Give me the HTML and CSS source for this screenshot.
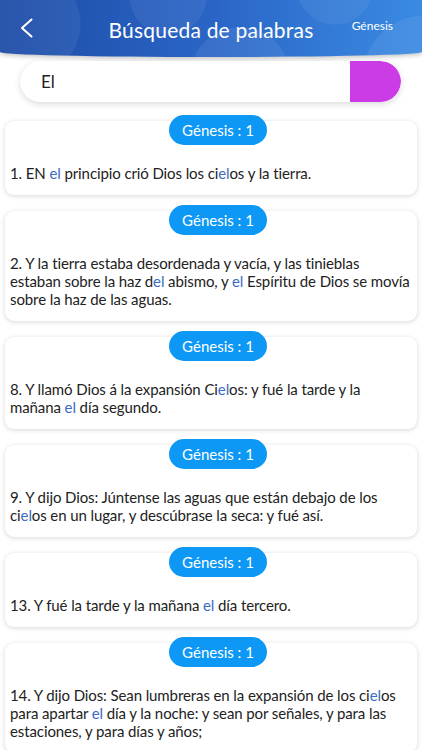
FILE: index.html
```html
<!DOCTYPE html>
<html lang="es">
<head>
    <meta charset="UTF-8">
    <meta name="viewport" content="width=device-width, initial-scale=1.0">
    <title>Búsqueda de palabras</title>
    <link rel="stylesheet" href="styles.css">
</head>
<body>
    <!-- Cabecera -->
    <div class="header">
        <button class="back-btn" aria-label="Atrás">
            <svg width="14" height="22" viewBox="0 0 14 22">
                <path d="M11.5 2.5 L2 11 L11.5 19.5" fill="none" stroke="#fff" stroke-width="2" stroke-linecap="round" stroke-linejoin="round"/>
            </svg>
        </button>
        <h1 class="title">Búsqueda de palabras</h1>
        <span class="book">Génesis</span>
    </div>

    <!-- Barra de búsqueda -->
    <div class="search">
        <input class="search-input" type="text" value="El">
        <button class="search-btn" aria-label="Buscar"></button>
    </div>

    <!-- Resultados -->
    <div class="results">
        <div class="item">
            <span class="pill">Génesis : 1</span>
            <div class="card">1. EN <em>el</em> principio crió Dios los ci<em>el</em>os y la tierra.</div>
        </div>
        <div class="item">
            <span class="pill">Génesis : 1</span>
            <div class="card">2. Y la tierra estaba desordenada y vacía, y las tinieblas estaban sobre la haz d<em>el</em> abismo, y <em>el</em> Espíritu de Dios se movía sobre la haz de las aguas.</div>
        </div>
        <div class="item">
            <span class="pill">Génesis : 1</span>
            <div class="card">8. Y llamó Dios á la expansión Ci<em>el</em>os: y fué la tarde y la mañana <em>el</em> día segundo.</div>
        </div>
        <div class="item">
            <span class="pill">Génesis : 1</span>
            <div class="card">9. Y dijo Dios: Júntense las aguas que están debajo de los ci<em>el</em>os en un lugar, y descúbrase la seca: y fué así.</div>
        </div>
        <div class="item">
            <span class="pill">Génesis : 1</span>
            <div class="card">13. Y fué la tarde y la mañana <em>el</em> día tercero.</div>
        </div>
        <div class="item">
            <span class="pill">Génesis : 1</span>
            <div class="card">14. Y dijo Dios: Sean lumbreras en la expansión de los ci<em>el</em>os para apartar <em>el</em> día y la noche: y sean por señales, y para las estaciones, y para días y años;</div>
        </div>
    </div>
</body>
</html>
```

FILE: styles.css
```css
body {
    margin: 0;
    background-color: #fff;
    font-family: Lato, "Noto Sans", sans-serif;
    color: #222;
    overflow: hidden;
}

/* Cabecera */
.header {
    height: 57px;
    display: grid;
    grid-template-columns: 1fr auto 1fr;
    align-items: center;
    padding: 3px 20px 2px;
    box-sizing: border-box;
    background-color: #2a62c2;
    background-image:
        radial-gradient(circle at 28px 24px, rgba(255, 255, 255, 0.06) 52px, transparent 53px),
        radial-gradient(circle at 168px -4px, rgba(255, 255, 255, 0.06) 38px, transparent 39px),
        radial-gradient(circle at 335px -14px, rgba(255, 255, 255, 0.06) 38px, transparent 39px),
        radial-gradient(circle at 240px 78px, rgba(255, 255, 255, 0.07) 50px, transparent 51px),
        radial-gradient(circle at 425px 78px, rgba(255, 255, 255, 0.07) 62px, transparent 63px),
        linear-gradient(90deg, #1d4ca6 0%, #2a65c6 50%, #3a8ae2 100%);
    border-radius: 0 0 50% 50% / 0 0 5px 5px;
    box-shadow: 0 2px 4px rgba(0, 0, 0, 0.22);
    color: #fff;
}

.back-btn {
    background: none;
    border: none;
    padding: 0;
    width: 14px;
    display: flex;
    margin-top: -3px;
    cursor: pointer;
}

.title {
    margin: 0;
    font-size: 21px;
    font-weight: normal;
    letter-spacing: 0.2px;
}

.book {
    justify-self: end;
    font-size: 12px;
    margin-top: -8px;
    margin-right: 9px;
}

/* Barra de búsqueda */
.search {
    display: flex;
    height: 41px;
    margin: 4px 21px 0 20px;
    border-radius: 21px;
    overflow: hidden;
    background-color: #fff;
    box-shadow: 0 2px 6px rgba(0, 0, 0, 0.15);
}

.search-input {
    flex: 1;
    border: none;
    outline: none;
    padding: 0 0 0 21px;
    font-family: inherit;
    font-size: 17px;
    color: #222;
    background: none;
}

.search-btn {
    width: 51px;
    border: none;
    background-color: #cc3ce6;
    border-radius: 0 21px 21px 0;
}

/* Resultados */
.results {
    padding: 13px 5px 0;
}

.item {
    display: flex;
    flex-direction: column;
    align-items: center;
    margin-bottom: 10px;
}

.pill {
    position: relative;
    z-index: 1;
    width: 98px;
    height: 30px;
    line-height: 30px;
    margin-left: 14px;
    border-radius: 15px;
    background-color: #0c98f4;
    color: #fff;
    font-size: 15px;
    text-align: center;
}

.card {
    align-self: stretch;
    margin-top: -24px;
    padding: 43px 4px 13px 5px;
    background-color: #fff;
    border-radius: 9px;
    box-shadow: 0 1px 5px rgba(0, 0, 0, 0.16);
    font-size: 15px;
    line-height: 18px;
    letter-spacing: -0.1px;
}

.card em {
    font-style: normal;
    color: #3a6cc4;
}
```
